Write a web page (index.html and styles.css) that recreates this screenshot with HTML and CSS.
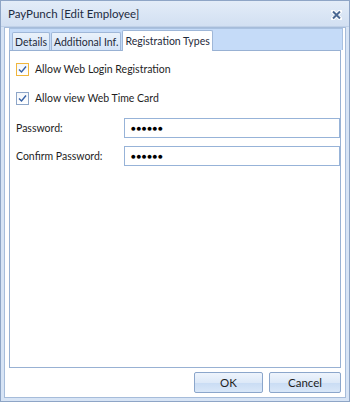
FILE: index.html
```html
<!DOCTYPE html>
<html lang="en">
<head>
  <meta charset="UTF-8">
  <title>PayPunch [Edit Employee]</title>
  <link rel="stylesheet" href="styles.css">
</head>
<body>

  <div class="window">
    <div class="titlebar">
      <span class="title">PayPunch [Edit Employee]</span>
      <span class="close">
        <svg width="11" height="10" viewBox="0 0 11 10">
          <path d="M2 1.5 L9 8.5 M9 1.5 L2 8.5" stroke="#ffffff" stroke-width="4" stroke-linecap="round"/>
          <path d="M2 1.5 L9 8.5 M9 1.5 L2 8.5" stroke="#4a6893" stroke-width="2"/>
        </svg>
      </span>
    </div>

    <div class="body">
      <div class="tabs">
        <div class="tab">Details</div>
        <div class="tab">Additional Inf.</div>
        <div class="tab active">Registration Types</div>
      </div>

      <div class="panel">
        <label class="check-row">
          <span class="checkbox focused"><svg width="9" height="9" viewBox="0 0 9 9"><path d="M1 4.5 L3.5 7 L8 1.5" fill="none" stroke="#3560a5" stroke-width="1.4"/></svg></span>
          Allow Web Login Registration
        </label>
        <label class="check-row last">
          <span class="checkbox"><svg width="9" height="9" viewBox="0 0 9 9"><path d="M1 4.5 L3.5 7 L8 1.5" fill="none" stroke="#3560a5" stroke-width="1.4"/></svg></span>
          Allow view Web Time Card
        </label>

        <div class="field-row">
          <span class="field-label">Password:</span>
          <div class="field-box">●●●●●●</div>
        </div>
        <div class="field-row">
          <span class="field-label">Confirm Password:</span>
          <div class="field-box">●●●●●●</div>
        </div>
      </div>

      <div class="footer">
        <button class="btn ok">OK</button>
        <button class="btn cancel">Cancel</button>
      </div>
    </div>
  </div>

</body>
</html>
```

FILE: styles.css
```css
body {
  margin: 0;
  padding: 0;
  font-family: Lato, 'Open Sans', sans-serif;
  font-size: 10.5px;
  color: #1e1e1e;
  background: #ffffff;
}

.window {
  width: 350px;
  height: 402px;
  box-sizing: border-box;
  border: 1px solid #8ea5c6;
  background: #d7e4f5;
  display: flex;
  flex-direction: column;
}

.titlebar {
  height: 25px;
  display: flex;
  align-items: center;
  justify-content: space-between;
  padding: 0 7px 0 7px;
  background: linear-gradient(#e3ecf8, #d2e0f2);
  border-bottom: 1px solid #c0d1e8;
}

.title {
  font-size: 11.5px;
  color: #1d2b3f;
}

.close {
  display: flex;
  margin-top: 2px;
}

.body {
  flex: 1;
  margin: 0 3px 3px 3px;
  border: 1px solid #a6bcda;
  background: #ffffff;
  padding: 0 2px 0 4px;
  display: flex;
  flex-direction: column;
}

.tabs {
  height: 21px;
  padding: 0 0 0 2px;
  display: flex;
  align-items: flex-end;
  background: #c5dbf8;
  border: 1px solid #a9c1e0;
  border-bottom: none;
}

.tab {
  height: 17px;
  padding: 0 2px;
  margin-right: 1px;
  display: flex;
  align-items: center;
  background: linear-gradient(#eaf2fb, #d5e4f7);
  border: 1px solid #9fb7d8;
  border-bottom: none;
  border-radius: 2px 2px 0 0;
  color: #1e2a3a;
}

.tab.active {
  height: 20px;
  background: #ffffff;
  margin-bottom: -1px;
  position: relative;
}

.panel {
  flex: 1;
  margin-right: 2px;
  border: 1px solid #98b1d3;
  background: #ffffff;
  padding: 10px 0 0 6px;
}

.check-row {
  display: flex;
  align-items: center;
  gap: 6px;
  height: 16px;
  margin-bottom: 13px;
  color: #1e1e1e;
}

.check-row.last {
  margin-bottom: 11px;
}

.checkbox {
  width: 11px;
  height: 11px;
  border: 1px solid #8ea6c8;
  background: linear-gradient(#f4f7fb, #ffffff);
  display: flex;
  align-items: center;
  justify-content: center;
}

.checkbox.focused {
  border-color: #f0b63c;
}

.field-row {
  display: flex;
  align-items: center;
  height: 21px;
  margin-bottom: 7px;
}

.field-label {
  width: 108px;
}

.field-box {
  flex: 1;
  height: 20px;
  box-sizing: border-box;
  border: 1px solid #97b3d8;
  padding-left: 6px;
  display: flex;
  align-items: center;
  font-size: 8px;
  letter-spacing: 0.6px;
  color: #000000;
}

.footer {
  height: 29px;
  display: flex;
  justify-content: flex-end;
  align-items: center;
  gap: 6px;
  padding-right: 2px;
}

.btn {
  height: 21px;
  font-family: Lato, 'Open Sans', sans-serif;
  font-size: 11.5px;
  color: #1e1e1e;
  border: 1px solid #8ba6cb;
  border-radius: 2px;
  background: linear-gradient(#eef4fc 0%, #dde9f8 50%, #c9dcf4 51%, #d9e7f8 100%);
  padding: 0;
}

.btn.ok {
  width: 69px;
}

.btn.cancel {
  width: 72px;
}
```
